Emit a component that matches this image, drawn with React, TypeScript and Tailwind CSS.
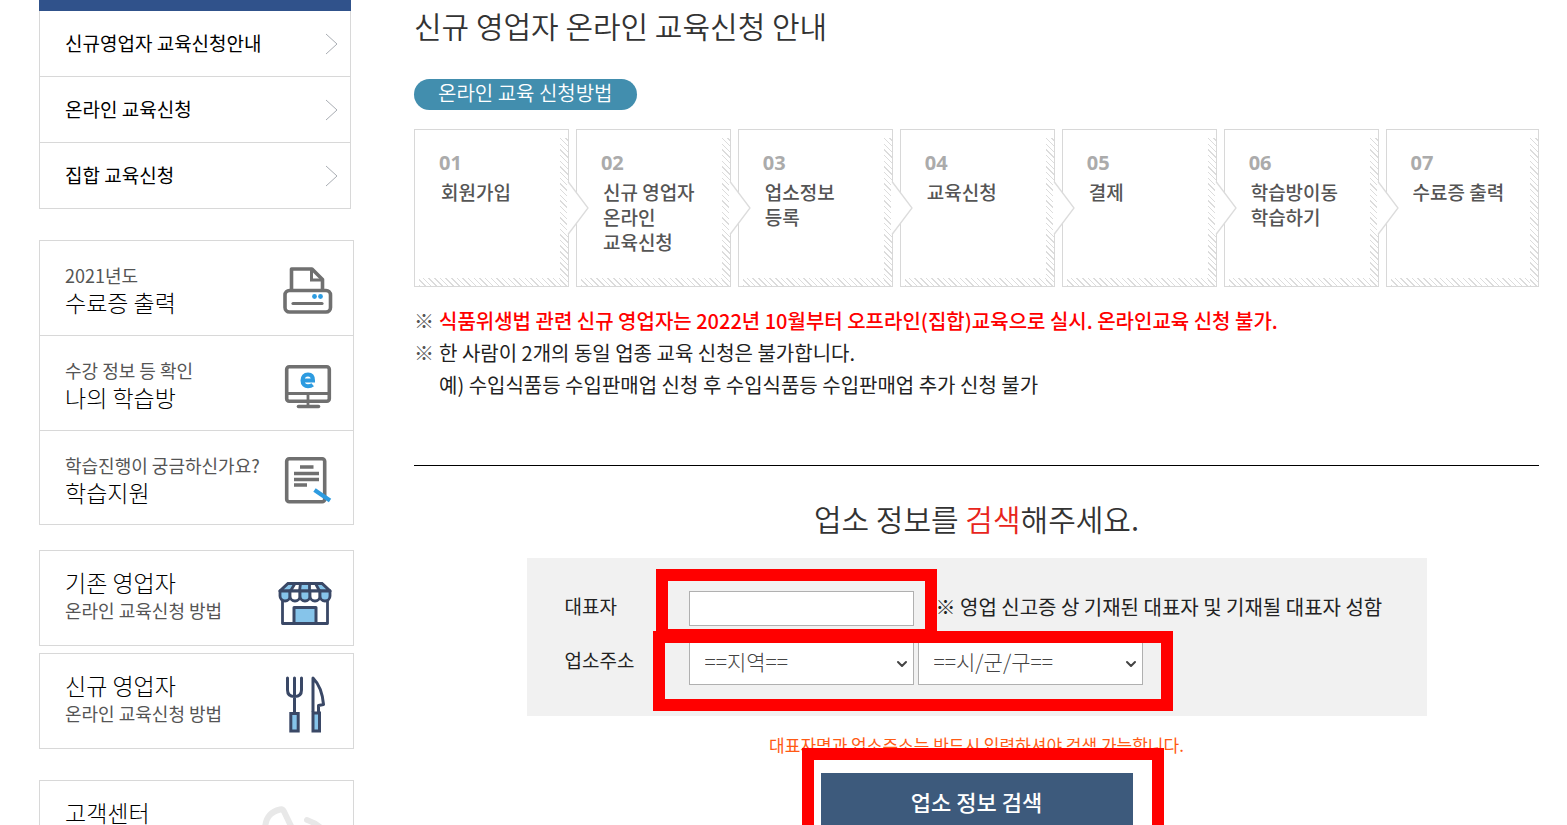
import type { ReactNode } from "react";
import { ChevronDown } from "lucide-react";

const MENU = ["신규영업자 교육신청안내", "온라인 교육신청", "집합 교육신청"];

const STEPS = [
  { no: "01", lines: ["회원가입"] },
  { no: "02", lines: ["신규 영업자", "온라인", "교육신청"] },
  { no: "03", lines: ["업소정보", "등록"] },
  { no: "04", lines: ["교육신청"] },
  { no: "05", lines: ["결제"] },
  { no: "06", lines: ["학습방이동", "학습하기"] },
  { no: "07", lines: ["수료증 출력"] },
];

function PrinterIcon() {
  return (
    <svg width="50" height="48" viewBox="0 0 50 48" fill="none" stroke="#707070" strokeWidth="3.6">
      <path d="M8.5 23V2H29L39.5 12.5V23" strokeLinejoin="round" />
      <path d="M28.5 2V13H39.5" strokeWidth="3" />
      <rect x="2" y="23.5" width="45.5" height="21.5" rx="4.5" />
      <path d="M10 36.5H39" strokeLinecap="round" strokeWidth="3.2" />
      <circle cx="31.5" cy="29.5" r="2.400" fill="#2d9be0" stroke="none" />
      <circle cx="37.5" cy="29.5" r="2.400" fill="#2d9be0" stroke="none" />
    </svg>
  );
}

function MonitorIcon() {
  return (
    <svg width="50" height="48" viewBox="0 0 50 48" fill="none" stroke="#707070" strokeWidth="3.6">
      <rect x="3.7" y="4.7" width="42.6" height="34.6" rx="2.5" />
      <path d="M4 31.5H46M25 32V44" strokeWidth="2.8" />
      <path d="M15.5 44.5H35.5" strokeLinecap="round" />
      <path
        d="M19.5 18.5H30C30 14.5 28 12.5 25 12.5C21.5 12.5 19.5 15 19.5 18.5C19.5 22.5 22 24.3 25 24.3C27 24.3 28.5 23.8 29.7 22.8"
        stroke="#2d9be0"
        strokeWidth="4"
      />
    </svg>
  );
}

function DocumentIcon() {
  return (
    <svg width="50" height="48" viewBox="0 0 50 48" fill="none" stroke="#707070" strokeWidth="3.6">
      <rect x="3.7" y="2.7" width="38" height="43" rx="2.5" />
      <path d="M17 11H30.5M11 17.500H36M11 23.500H36M11 29H24" strokeWidth="3.6" />
      <path d="M31.5 34L47 44.500" stroke="#2d9be0" strokeWidth="4.200" />
    </svg>
  );
}

function StoreIcon() {
  return (
    <svg width="54" height="44" viewBox="0 0 54 44" fill="none" stroke="#3a4866" strokeWidth="2.8" strokeLinejoin="round">
      <path d="M4.5 17V41.5H49.5V17" fill="#fff" />
      <path d="M2 9L10 1.5H44L52 9Z" fill="#fff" />
      <path d="M2 9L10 1.5H17L12.5 9ZM22.5 1.5H31.5V9H21.5ZM37.5 1.5H44L52 9H41.5Z" fill="#86c4ea" />
      <path d="M2 9H12V14A5 5 0 0 1 2 14Z" fill="#86c4ea" />
      <path d="M12 9H22V14A5 5 0 0 1 12 14Z" fill="#fff" />
      <path d="M22 9H32V14A5 5 0 0 1 22 14Z" fill="#86c4ea" />
      <path d="M32 9H42V14A5 5 0 0 1 32 14Z" fill="#fff" />
      <path d="M42 9H52V14A5 5 0 0 1 42 14Z" fill="#86c4ea" />
      <path d="M16 41.5V25.5H38V41.5Z" fill="#86c4ea" strokeWidth="3" />
    </svg>
  );
}

function CutleryIcon() {
  return (
    <svg width="40" height="58" viewBox="0 0 40 58" fill="none" stroke="#3a4866" strokeWidth="3">
      <path d="M2.5 2V14C2.5 18.5 5 20.5 9.5 20.5C14 20.5 16.5 18.5 16.5 14V2M9.5 2V37" strokeLinecap="round" />
      <rect x="5.8" y="37.5" width="7.4" height="17.500" fill="#86c4ea" />
      <path d="M28 36V2C33.5 7.500 37.500 17 38.500 28.500L33.500 29.500V36" strokeLinejoin="round" />
      <rect x="28" y="37" width="6.5" height="18" fill="#86c4ea" />
    </svg>
  );
}

function SupportIcon() {
  return (
    <svg width="70" height="50" viewBox="0 0 70 50" fill="none" stroke="#e8e8e8" strokeWidth="6" strokeLinecap="round" strokeLinejoin="round">
      <path d="M5 25C5 13 10 7 20 4.5C22 4 23 4.5 24 6.5L31 21C32 23 31.5 24 30 25" />
      <path d="M47 15C53 17 58 20 62 24" />
    </svg>
  );
}

// diagonal hatching along the right and bottom edges of a step
const HATCH =
  "bg-[repeating-linear-gradient(45deg,#dcdcdc_0px,#dcdcdc_1px,transparent_1px,transparent_4px)]";

function Step({ no, lines, last }: { no: string; lines: string[]; last: boolean }) {
  return (
    <li className="relative h-[158px] border border-[#d8d8d8] bg-white px-6 pt-5">
      <span className={`absolute top-2 right-0 bottom-0 w-2 ${HATCH}`} />
      <span className={`absolute right-2 bottom-0 left-1 h-2 ${HATCH}`} />
      {!last && (
        <svg className="absolute -right-[22px] top-[51px] z-10" width="23" height="54" viewBox="0 0 23 54">
          <path d="M0 0L21 27L0 54Z" fill="#fff" />
          <path d="M1 0.5L21 27L1 53.5" fill="none" stroke="#dcdcdc" strokeWidth="1.3" />
        </svg>
      )}
      <p className="font-['Noto_Sans'] text-[20px] leading-[26px] font-bold text-[#ababab]">{no}</p>
      <p className="mt-[3px] pl-[2px] text-[19px] leading-[25px] font-medium whitespace-nowrap text-[#555]">
        {lines.map((line) => (
          <span key={line} className="block">
            {line}
          </span>
        ))}
      </p>
    </li>
  );
}

function QuickLink({ sub, title, icon }: { sub: string; title: string; icon: ReactNode }) {
  return (
    <li className="h-[95px] border-b border-[#d8d8d8] last:h-[93px] last:border-b-0">
      <a href="#" className="flex h-full items-center justify-between pt-[2px] pr-5 pl-[25px]">
        <span>
          <span className="block text-[18px] leading-[26px] text-[#555]">{sub}</span>
          <span className="block text-[23px] leading-[28px] font-light text-black">{title}</span>
        </span>
        <span className="pt-[3px]">{icon}</span>
      </a>
    </li>
  );
}

function GuideCard({ title, sub, icon }: { title: string; sub?: string; icon: ReactNode }) {
  return (
    <a href="#" className="flex h-24 justify-between border border-[#d8d8d8] pr-[21px] pl-[25px]">
      <span className="pt-[17px]">
        <span className="block text-[23px] leading-[28px] font-light text-black">{title}</span>
        {sub && <span className="block text-[18px] leading-[28px] text-[#555]">{sub}</span>}
      </span>
      {icon}
    </a>
  );
}

function Sidebar() {
  return (
    <aside className="w-[315px] shrink-0">
      <nav className="mr-[3px]">
        <div className="h-[11px] bg-[#30528b]" />
        <ul className="border-x border-[#d8d8d8]">
          {MENU.map((item) => (
            <li key={item} className="border-b border-[#d8d8d8]">
              <a href="#" className="flex h-[65px] items-center justify-between pr-3 pl-[25px] text-[19px] text-black">
                {item}
                <svg width="13" height="22" viewBox="0 0 13 22" fill="none" stroke="#a9adb3">
                  <path d="M1 1L12 11L1 21" />
                </svg>
              </a>
            </li>
          ))}
        </ul>
      </nav>

      <ul className="mt-[31px] border border-[#d8d8d8]">
        <QuickLink sub="2021년도" title="수료증 출력" icon={<PrinterIcon />} />
        <QuickLink sub="수강 정보 등 확인" title="나의 학습방" icon={<MonitorIcon />} />
        <QuickLink sub="학습진행이 궁금하신가요?" title="학습지원" icon={<DocumentIcon />} />
      </ul>

      <div className="mt-[25px] flex flex-col gap-[7px]">
        <GuideCard
          title="기존 영업자"
          sub="온라인 교육신청 방법"
          icon={<span className="pt-[31px]"><StoreIcon /></span>}
        />
        <GuideCard
          title="신규 영업자"
          sub="온라인 교육신청 방법"
          icon={<span className="pt-[22px] pr-[7px]"><CutleryIcon /></span>}
        />
      </div>
      <div className="mt-[31px]">
        <GuideCard title="고객센터" icon={<span className="pt-6 pr-[2px]"><SupportIcon /></span>} />
      </div>
    </aside>
  );
}

function AreaSelect({ label, placeholder }: { label: string; placeholder: string }) {
  return (
    <div className="relative">
      <select
        aria-label={label}
        className="block h-11 w-[225px] appearance-none border border-[#b0b0b0] bg-white pb-1 pl-[15px] text-[21px] leading-[30px] font-light text-[#444]"
      >
        <option>{placeholder}</option>
      </select>
      <ChevronDown
        className="pointer-events-none absolute top-[15px] right-1 text-[#444]"
        size={16}
        strokeWidth={3}
      />
    </div>
  );
}

function SearchForm() {
  return (
    <form className="relative mx-auto w-[900px]" onSubmit={(e) => e.preventDefault()}>
      <div className="flex flex-col gap-[15px] bg-[#f1f1f1] pt-[33px] pb-[31px] pl-[38px] text-[19px] text-[#222]">
        <div className="flex h-[35px] items-center">
          <label htmlFor="owner" className="w-[124px] pb-1">
            대표자
          </label>
          <input
            id="owner"
            type="text"
            className="h-[35px] w-[225px] border border-[#b0b0b0] bg-white px-3"
          />
          <span className="ml-[22px] pb-1 text-[20px] whitespace-nowrap">
            ※ 영업 신고증 상 기재된 대표자 및 기재될 대표자 성함
          </span>
        </div>
        <div className="flex h-11 items-center">
          <span className="w-[124px] pb-[6px]">업소주소</span>
          <div className="flex gap-1">
            <AreaSelect label="지역" placeholder="==지역==" />
            <AreaSelect label="시/군/구" placeholder="==시/군/구==" />
          </div>
        </div>
      </div>

      <p className="pt-4 text-center text-[17px] leading-[26px] text-[#ff5a14]">
        대표자명과 업소주소는 반드시 입력하셔야 검색 가능합니다.
      </p>
      <button
        type="submit"
        className="mx-auto mt-[15px] block h-[60px] w-[312px] bg-[#3d5a7c] pb-1 text-[22px] font-medium text-white"
      >
        업소 정보 검색
      </button>

      {/* highlight frames */}
      <div className="pointer-events-none absolute top-[11px] left-[129px] h-[72px] w-[281px] border-[12px] border-[#ff0000]" />
      <div className="pointer-events-none absolute top-[73px] left-[126px] h-20 w-[520px] border-[12px] border-[#ff0000]" />
      <div className="pointer-events-none absolute top-[190px] left-[275px] h-[104px] w-[362px] border-[12px] border-[#ff0000]" />
    </form>
  );
}

export default function App() {
  return (
    <div className="flex h-screen gap-[60px] overflow-hidden bg-white pr-7 pl-[39px] font-['Noto_Sans_CJK_KR',sans-serif]">
      <Sidebar />

      <main className="min-w-0 flex-1">
        <h1 className="pt-[2px] text-[30px] leading-[46px] font-[350] text-[#333]">
          신규 영업자 온라인 교육신청 안내
        </h1>

        <h2 className="mt-[31px] w-fit rounded-full bg-[#428eae] px-6 pb-1 text-[20px] leading-[27px] font-[350] text-white">
          온라인 교육 신청방법
        </h2>

        <ol className="mt-[19px] grid grid-cols-[repeat(6,1.01fr)_1fr] gap-[7px]">
          {STEPS.map((step, i) => (
            <Step key={step.no} no={step.no} lines={step.lines} last={i === STEPS.length - 1} />
          ))}
        </ol>

        <ul className="mt-[18px] text-[20px] leading-8 text-[#222]">
          <li className="flex">
            <span className="w-[25px] shrink-0 text-[#555]">※</span>
            <strong className="font-medium text-[#ff0000]">
              식품위생법 관련 신규 영업자는 2022년 10월부터 오프라인(집합)교육으로 실시. 온라인교육 신청 불가.
            </strong>
          </li>
          <li className="flex">
            <span className="w-[25px] shrink-0 text-[#555]">※</span>
            <p>
              한 사람이 2개의 동일 업종 교육 신청은 불가합니다.
              <br />
              예) 수입식품등 수입판매업 신청 후 수입식품등 수입판매업 추가 신청 불가
            </p>
          </li>
        </ul>

        <hr className="mt-16 border-black" />

        <h2 className="mt-[29px] mb-[17px] text-center text-[30px] leading-[46px] font-[350] text-[#333]">
          업소 정보를 <span className="text-[#e8251c]">검색</span>해주세요.
        </h2>

        <SearchForm />
      </main>
    </div>
  );
}
